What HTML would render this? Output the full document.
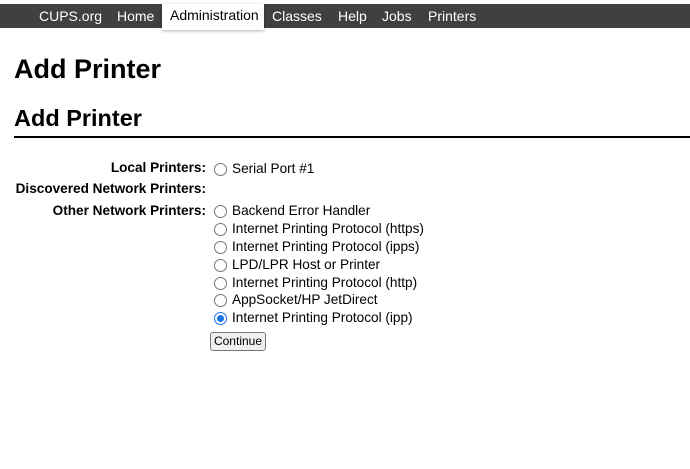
<!DOCTYPE html>
<html><head><style>
body{margin:0;font-family:"Liberation Sans",sans-serif;background:#fff;color:#000;width:690px;height:469px;overflow:hidden;position:relative}
.nav{position:absolute;top:4px;left:0;width:690px;height:24px;background:#404040}
.nav span{position:absolute;top:4px;color:#fff;font-size:14px}
.nav .act{top:0;height:26px;background:#fff;color:#000;left:162px;width:102px;box-shadow:0 1px 3px rgba(0,0,0,.3)}
.nav .act b{font-weight:normal;position:absolute;left:8px;top:3px}
h1{position:absolute;margin:0;left:14px;top:54px;font-size:27px}
h2{position:absolute;margin:0;left:14px;top:105px;font-size:23.5px}
.rule{position:absolute;left:14px;top:136px;width:676px;height:2px;background:#000}
.l{position:absolute;right:484px;font-size:13.6px;font-weight:bold}
.r{position:absolute;left:214px;font-size:13.6px;height:16px}
.r i{position:absolute;left:0;top:1px;width:11px;height:11px;border:1px solid #767676;border-radius:50%}
.r.on i{border-color:#1a73e8}
.r.on i:after{content:"";position:absolute;left:2px;top:2px;width:7px;height:7px;border-radius:50%;background:#1a73e8}
.r span{position:absolute;left:18px;top:-1px;white-space:nowrap}
.btn{position:absolute;left:210px;top:332px;width:54px;height:17px;border:1px solid #767676;border-radius:3px;background:#efefef;font-size:12px;text-align:center;line-height:17px}
</style></head><body>
<div class="nav">
<span style="left:39px">CUPS.org</span>
<span style="left:117px">Home</span>
<span class="act"><b>Administration</b></span>
<span style="left:272px">Classes</span>
<span style="left:338px">Help</span>
<span style="left:382px">Jobs</span>
<span style="left:428px">Printers</span>
</div>
<h1>Add Printer</h1>
<h2>Add Printer</h2>
<div class="rule"></div>
<div class="l" style="top:160px">Local Printers:</div>
<div class="l" style="top:181px">Discovered Network Printers:</div>
<div class="l" style="top:203px">Other Network Printers:</div>
<div class="r" style="top:162px"><i></i><span>Serial Port #1</span></div>
<div class="r" style="top:204px"><i></i><span>Backend Error Handler</span></div>
<div class="r" style="top:222px"><i></i><span>Internet Printing Protocol (https)</span></div>
<div class="r" style="top:240px"><i></i><span>Internet Printing Protocol (ipps)</span></div>
<div class="r" style="top:258px"><i></i><span>LPD/LPR Host or Printer</span></div>
<div class="r" style="top:276px"><i></i><span>Internet Printing Protocol (http)</span></div>
<div class="r" style="top:293px"><i></i><span>AppSocket/HP JetDirect</span></div>
<div class="r on" style="top:311px"><i></i><span>Internet Printing Protocol (ipp)</span></div>
<div class="btn">Continue</div>
</body></html>
